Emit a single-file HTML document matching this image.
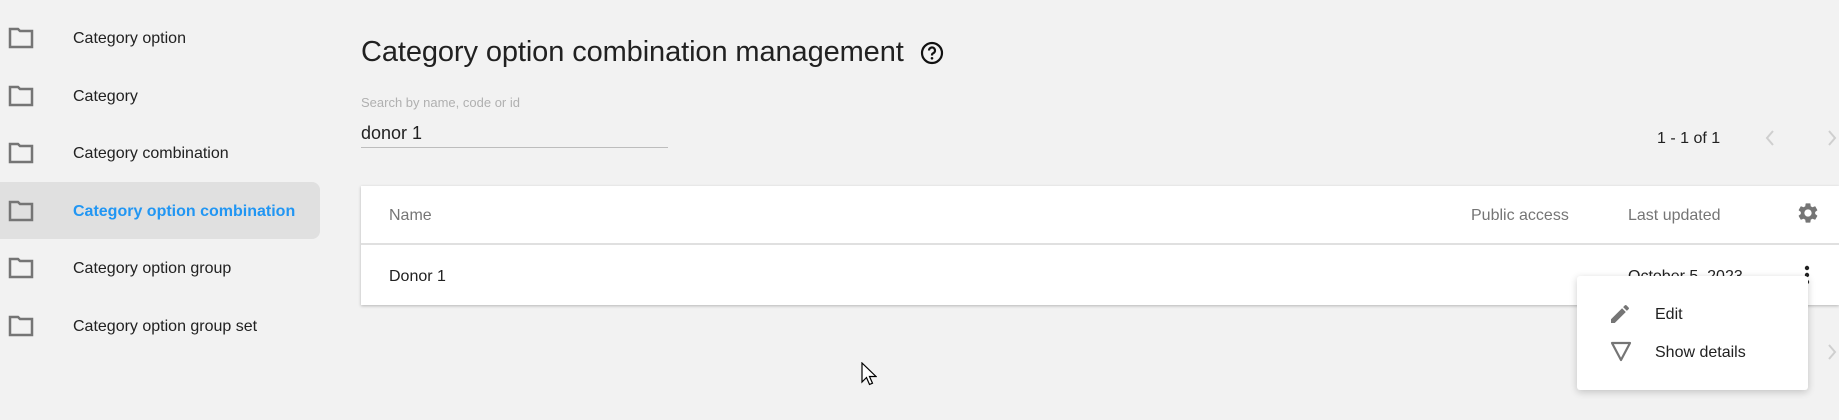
<!DOCTYPE html>
<html><head><meta charset="utf-8"><style>
*{margin:0;padding:0;box-sizing:border-box}
body{width:1839px;height:420px;background:#f2f2f2;font-family:"Liberation Sans",sans-serif;position:relative;overflow:hidden;color:#212121}
.a{position:absolute;white-space:nowrap}
.nav{position:absolute;left:0;width:320px;height:57px}
.nav svg{position:absolute;left:8px;top:18px}
.nav span{position:absolute;left:73px;top:50%;transform:translateY(-45%);font-size:16px;color:#212121}
.sel{background:#e0e0e0;border-radius:0 8px 8px 0}
.sel span{color:#2196f3;font-weight:bold}
</style></head><body>
<div class="nav" style="top:9px"><svg width="26" height="22" viewBox="0 0 26 22"><path d="M2 2h8l2 2h12v16H2z" fill="none" stroke="#757575" stroke-width="2.5"/></svg><span>Category option</span></div>
<div class="nav" style="top:67px"><svg width="26" height="22" viewBox="0 0 26 22"><path d="M2 2h8l2 2h12v16H2z" fill="none" stroke="#757575" stroke-width="2.5"/></svg><span>Category</span></div>
<div class="nav" style="top:124px"><svg width="26" height="22" viewBox="0 0 26 22"><path d="M2 2h8l2 2h12v16H2z" fill="none" stroke="#757575" stroke-width="2.5"/></svg><span>Category combination</span></div>
<div class="nav sel" style="top:182px"><svg width="26" height="22" viewBox="0 0 26 22"><path d="M2 2h8l2 2h12v16H2z" fill="none" stroke="#757575" stroke-width="2.5"/></svg><span>Category option combination</span></div>
<div class="nav" style="top:239px"><svg width="26" height="22" viewBox="0 0 26 22"><path d="M2 2h8l2 2h12v16H2z" fill="none" stroke="#757575" stroke-width="2.5"/></svg><span>Category option group</span></div>
<div class="nav" style="top:297px"><svg width="26" height="22" viewBox="0 0 26 22"><path d="M2 2h8l2 2h12v16H2z" fill="none" stroke="#757575" stroke-width="2.5"/></svg><span>Category option group set</span></div>

<div class="a" style="left:361px;top:36px;font-size:29px;color:#212121;letter-spacing:-0.1px">Category option combination management</div>
<svg class="a" style="left:920px;top:41px" width="24" height="24" viewBox="0 0 24 24"><circle cx="12" cy="12" r="10" fill="none" stroke="#111" stroke-width="2.2"/><path d="M9 9.5a3 3 0 1 1 4.2 2.7c-.8.4-1.2 1-1.2 1.8v.5" fill="none" stroke="#111" stroke-width="2.2"/><circle cx="12" cy="17.3" r="1.3" fill="#111"/></svg>

<div class="a" style="left:361px;top:95px;font-size:13px;color:#b0b0b0">Search by name, code or id</div>
<div class="a" style="left:361px;top:123px;font-size:18px;color:#212121">donor 1</div>
<div class="a" style="left:361px;top:147px;width:307px;height:1px;background:#bdbdbd"></div>

<div class="a" style="left:1657px;top:130px;font-size:16px;color:#212121">1 - 1 of 1</div>
<svg class="a" style="left:1764px;top:128px" width="12" height="20" viewBox="0 0 12 20"><path d="M9 3L3 10l6 7" fill="none" stroke="#cfcfcf" stroke-width="2"/></svg>
<svg class="a" style="left:1826px;top:128px" width="12" height="20" viewBox="0 0 12 20"><path d="M3 3l6 7-6 7" fill="none" stroke="#cfcfcf" stroke-width="2"/></svg>
<svg class="a" style="left:1826px;top:342px" width="12" height="20" viewBox="0 0 12 20"><path d="M3 3l6 7-6 7" fill="none" stroke="#cfcfcf" stroke-width="2"/></svg>

<div class="a" style="left:361px;top:186px;width:1478px;height:119px;background:#fff;box-shadow:0 1px 3px rgba(0,0,0,.25)"></div>
<div class="a" style="left:361px;top:243px;width:1478px;height:2px;background:#e0e0e0"></div>
<div class="a" style="left:389px;top:207px;font-size:16px;color:#757575">Name</div>
<div class="a" style="left:1471px;top:207px;font-size:16px;color:#757575">Public access</div>
<div class="a" style="left:1628px;top:207px;font-size:16px;color:#757575">Last updated</div>
<svg class="a" style="left:1796px;top:201px" width="24" height="24" viewBox="0 0 24 24"><path fill="#757575" d="M19.14 12.94c.04-.3.06-.61.06-.94 0-.32-.02-.64-.07-.94l2.03-1.58a.49.49 0 0 0 .12-.61l-1.920-3.32a.488.488 0 0 0-.59-.22l-2.39.96c-.5-.38-1.03-.7-1.62-.94l-.36-2.54a.484.484 0 0 0-.48-.41h-3.84c-.24 0-.43.17-.47.41l-.36 2.54c-.59.24-1.13.57-1.62.94l-2.39-.96c-.22-.08-.47 0-.59.22L2.74 8.87c-.12.21-.08.47.12.61l2.03 1.58c-.05.3-.09.63-.09.94s.02.64.07.94l-2.03 1.58a.49.49 0 0 0-.12.61l1.92 3.32c.12.22.37.29.59.22l2.39-.96c.5.38 1.030.7 1.62.94l.36 2.54c.05.24.24.41.48.41h3.84c.24 0 .44-.17.47-.41l.36-2.54c.59-.24 1.13-.56 1.62-.94l2.39.96c.22.08.47 0 .59-.22l1.92-3.32c.12-.22.07-.47-.12-.61l-2.01-1.58zM12 15.6c-1.98 0-3.6-1.62-3.6-3.6s1.62-3.6 3.6-3.6 3.6 1.62 3.6 3.6-1.62 3.6-3.6 3.6z"/></svg>
<div class="a" style="left:389px;top:268px;font-size:16px;color:#212121">Donor 1</div>
<div class="a" style="left:1628px;top:268px;font-size:16px;color:#212121">October 5, 2023</div>
<svg class="a" style="left:1803px;top:264px" width="8" height="24" viewBox="0 0 8 24"><circle cx="4" cy="4" r="2.2" fill="#212121"/><circle cx="4" cy="11" r="2.2" fill="#212121"/><circle cx="4" cy="18" r="2.2" fill="#212121"/></svg>

<div class="a" style="left:1577px;top:276px;width:231px;height:114px;background:#fff;border-radius:3px;box-shadow:0 2px 8px rgba(0,0,0,.2)"></div>
<svg class="a" style="left:1608px;top:302px" width="24" height="24" viewBox="0 0 24 24"><path fill="#757575" d="M3 17.25V21h3.75L17.81 9.94l-3.75-3.75L3 17.25zM20.71 7.04a1 1 0 0 0 0-1.41l-2.34-2.34a1 1 0 0 0-1.41 0l-1.83 1.83 3.75 3.75 1.83-1.83z"/></svg>
<div class="a" style="left:1655px;top:306px;font-size:16px;color:#212121">Edit</div>
<svg class="a" style="left:1610px;top:340px" width="22" height="22" viewBox="0 0 22 22"><path d="M2 3h18L11 20z" fill="none" stroke="#757575" stroke-width="2.2" stroke-linejoin="round"/></svg>
<div class="a" style="left:1655px;top:344px;font-size:16px;color:#212121">Show details</div>

<svg class="a" style="left:861px;top:362px" width="16" height="24" viewBox="0 0 16 24"><path d="M1 1v19l4.5-4.5 3 7 3-1.3-3-6.7h6.5z" fill="#fff" stroke="#000" stroke-width="1.2"/></svg>
</body></html>
